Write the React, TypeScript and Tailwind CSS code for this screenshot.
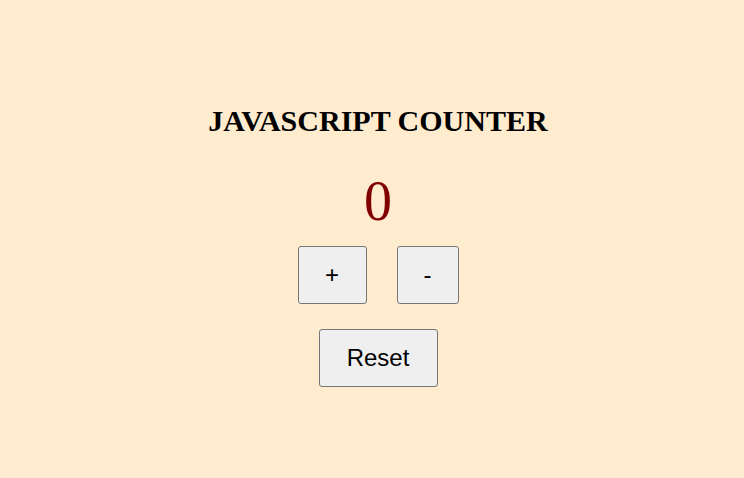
export default function App() {
  return (
    <main className="min-h-[478px] w-full bg-[#ffebcd] flex flex-col items-center pt-[103px] pl-[12px] font-['Liberation_Serif',serif]">
      <h1 className="text-[30px] leading-[36px] font-bold text-black">JAVASCRIPT COUNTER</h1>
      <div className="mt-[30px] text-[56px] leading-[64px] text-[#800000]">0</div>
      <div className="mt-[13px] flex gap-[30px] font-['Liberation_Sans',sans-serif]">
        <button className="h-[58px] w-[69px] bg-[#efefef] border border-[#767676] rounded-[3px] text-[24px] text-black">
          +
        </button>
        <button className="h-[58px] w-[62px] bg-[#efefef] border border-[#767676] rounded-[3px] text-[24px] text-black">
          -
        </button>
      </div>
      <button className="mt-[25px] h-[58px] w-[119px] bg-[#efefef] border border-[#767676] rounded-[3px] text-[24px] text-black font-['Liberation_Sans',sans-serif]">
        Reset
      </button>
    </main>
  );
}
